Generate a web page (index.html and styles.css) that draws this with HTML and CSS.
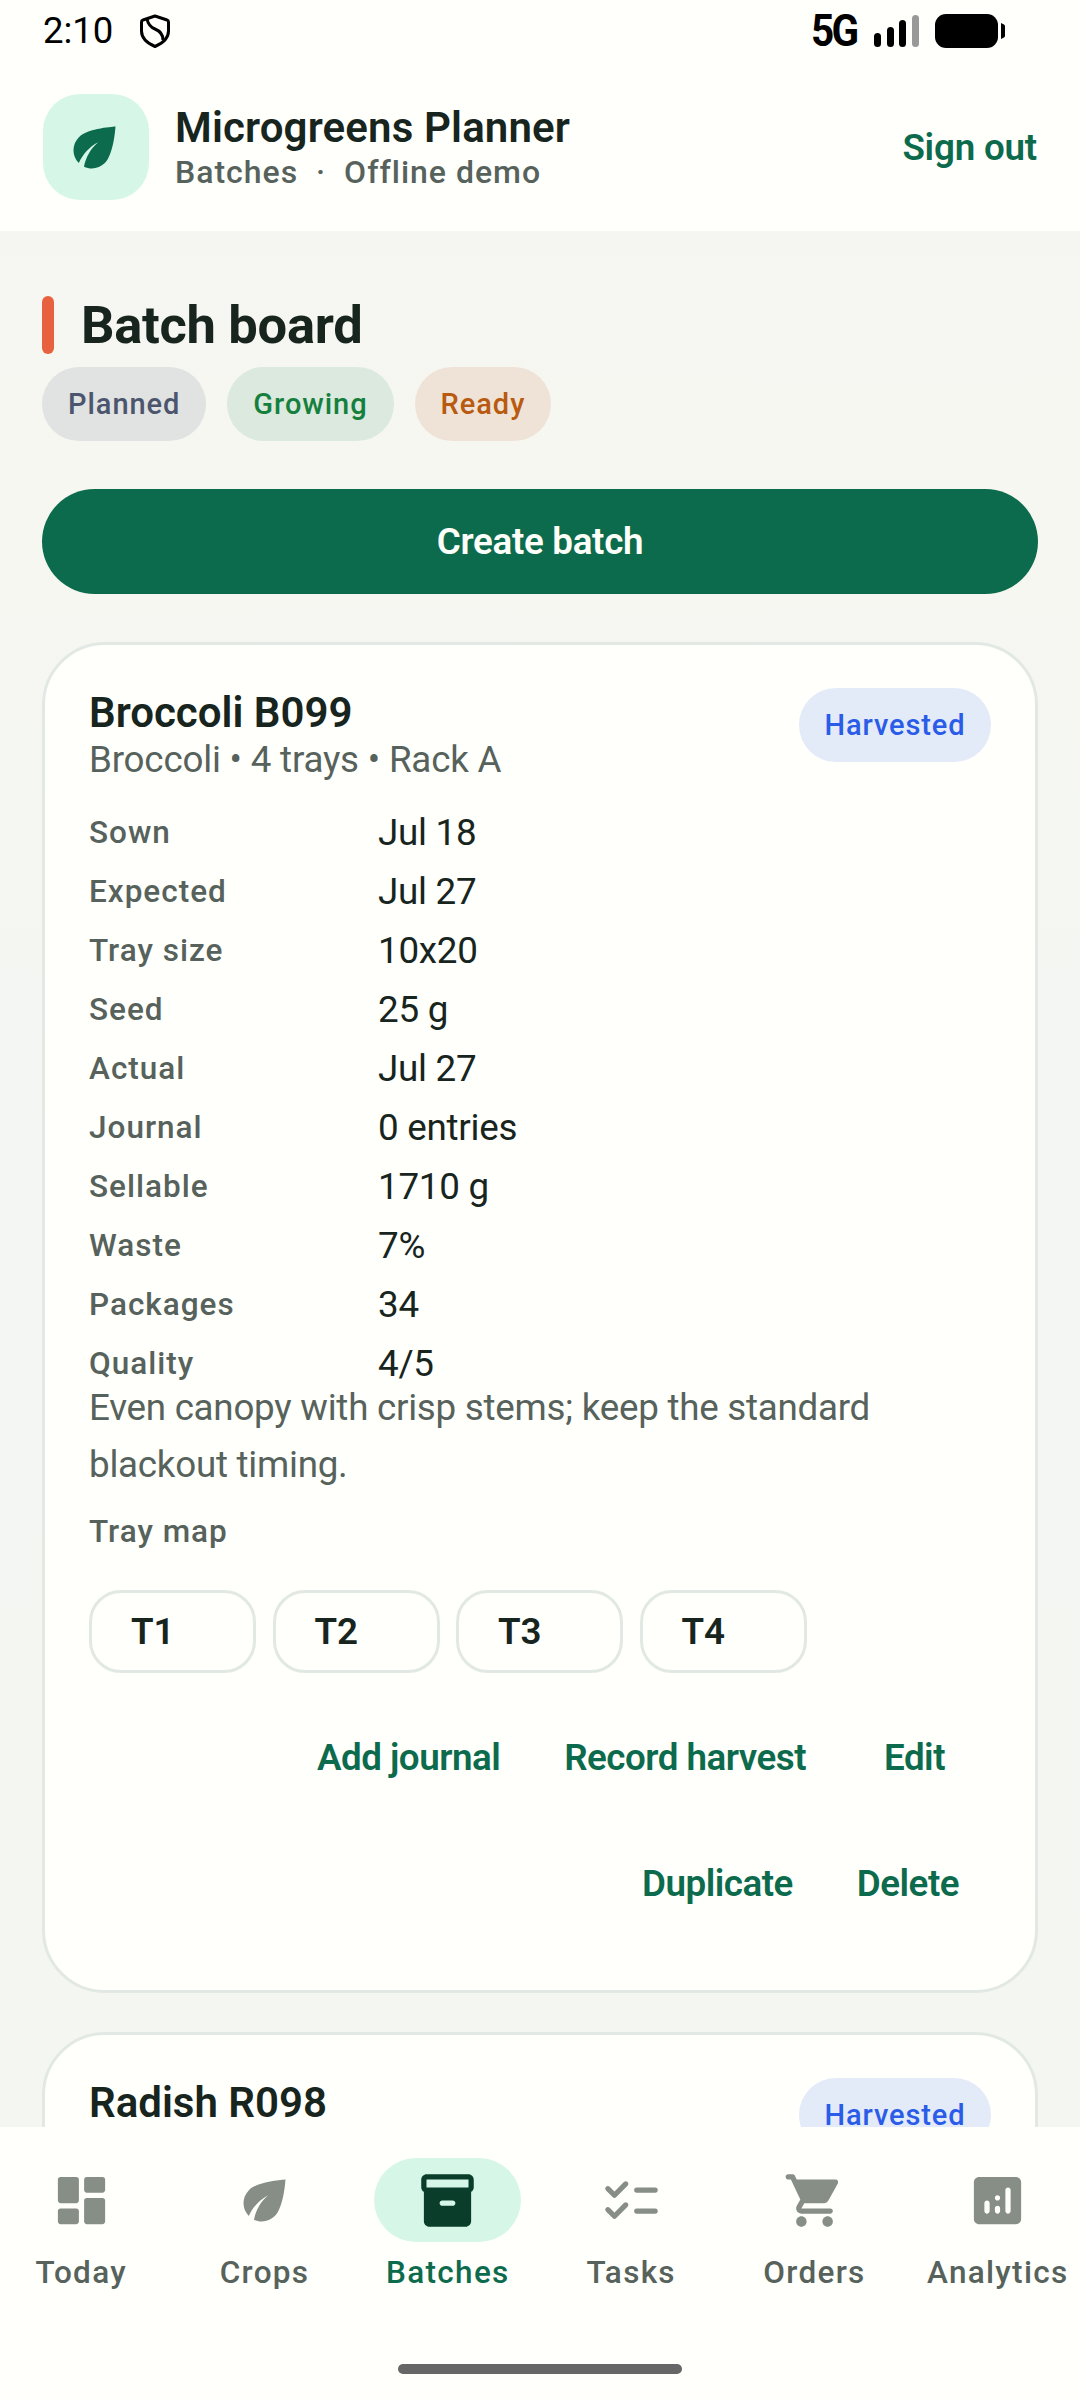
FILE: index.html
```html
<!DOCTYPE html>
<html lang="en">
<head>
<meta charset="utf-8">
<title>Microgreens Planner</title>
<link rel="stylesheet" href="styles.css">
</head>
<body>
<div class="app">
  <header class="top">
    <div class="status">
      <div class="status-left">
        <span class="time">2:10</span>
        <svg class="shield" viewBox="0 0 30 34"><path d="M15 2 L27 6 C28 6.300 28.500 7 28.500 8 L28.500 17 C28.500 24 22 29.500 15 32.500 C8 29.500 1.500 24 1.500 17 L1.500 8 C1.500 7 2 6.300 3 6 Z" fill="none" stroke="#000" stroke-width="3" stroke-linejoin="round"/><path d="M7 5 C8 10 10 13 15 15 C20 17 23 20 23 26" fill="none" stroke="#000" stroke-width="3"/></svg>
      </div>
      <div class="status-right">
        <span class="net">5G</span>
        <svg class="signal" viewBox="0 0 45 32"><rect x="0" y="18" width="7" height="14" rx="3.500" fill="#000"/><rect x="13" y="12" width="7" height="20" rx="3.500" fill="#000"/><rect x="25" y="5" width="7" height="27" rx="3.500" fill="#000"/><rect x="38" y="0" width="7" height="32" rx="3.500" fill="#999"/></svg>
        <svg class="battery" viewBox="0 0 70 34"><rect x="0" y="0" width="63" height="34" rx="11" fill="#000"/><path d="M66 9 L69 10.500 C69.700 11 70 11.500 70 12.500 L70 21.500 C70 22.500 69.700 23 69 23.500 L66 25 Z" fill="#000"/></svg>
      </div>
    </div>
    <div class="appbar">
      <div class="logo">
        <svg class="logo-leaf" viewBox="0 0 24 24"><path d="M6.050 8.050c-2.730 2.730-2.730 7.150-.020 9.880 1.470-3.400 4.090-6.240 7.360-7.930-2.770 2.340-4.710 5.610-5.390 9.320 2.600 1.230 5.800.780 7.950-1.370C19.430 14.470 20 4 20 4S9.530 4.570 6.050 8.050z"/></svg>
      </div>
      <div class="brand">
        <div class="brand-title">Microgreens Planner</div>
        <div class="brand-sub">Batches &nbsp;·&nbsp; Offline demo</div>
      </div>
      <a class="signout">Sign out</a>
    </div>
  </header>

  <main class="board">
    <div class="heading">
      <span class="heading-bar"></span>
      <h1 class="heading-text">Batch board</h1>
    </div>
    <div class="pills">
      <span class="pill pill-planned">Planned</span>
      <span class="pill pill-growing">Growing</span>
      <span class="pill pill-ready">Ready</span>
    </div>
    <button class="create">Create batch</button>

    <article class="card">
      <div class="card-head">
        <div class="card-text">
          <h2 class="card-title">Broccoli B099</h2>
          <div class="card-sub">Broccoli • 4 trays • Rack A</div>
        </div>
        <span class="badge">Harvested</span>
      </div>
      <dl class="facts">
        <dt>Sown</dt><dd>Jul 18</dd>
        <dt>Expected</dt><dd>Jul 27</dd>
        <dt>Tray size</dt><dd>10x20</dd>
        <dt>Seed</dt><dd>25 g</dd>
        <dt>Actual</dt><dd>Jul 27</dd>
        <dt>Journal</dt><dd>0 entries</dd>
        <dt>Sellable</dt><dd>1710 g</dd>
        <dt>Waste</dt><dd>7%</dd>
        <dt>Packages</dt><dd>34</dd>
        <dt>Quality</dt><dd>4/5</dd>
      </dl>
      <p class="note">Even canopy with crisp stems; keep the standard blackout timing.</p>
      <div class="map-label">Tray map</div>
      <div class="chips">
        <span class="chip">T1</span>
        <span class="chip">T2</span>
        <span class="chip">T3</span>
        <span class="chip">T4</span>
      </div>
      <div class="actions">
        <a class="action">Add journal</a>
        <a class="action">Record harvest</a>
        <a class="action">Edit</a>
        <a class="action">Duplicate</a>
        <a class="action">Delete</a>
      </div>
    </article>

    <article class="card card-next">
      <div class="card-head">
        <div class="card-text">
          <h2 class="card-title">Radish R098</h2>
        </div>
        <span class="badge">Harvested</span>
      </div>
    </article>
  </main>

  <nav class="nav">
    <div class="tabs">
      <div class="tab">
        <span class="tab-icon"><svg viewBox="0 0 24 24"><path d="M4 13h6c.550 0 1-.450 1-1V4c0-.550-.450-1-1-1H4c-.550 0-1 .450-1 1v8c0 .550.450 1 1 1zm0 8h6c.550 0 1-.450 1-1v-4c0-.550-.450-1-1-1H4c-.550 0-1 .450-1 1v4c0 .550.450 1 1 1zm10 0h6c.550 0 1-.450 1-1v-8c0-.550-.450-1-1-1h-6c-.550 0-1 .450-1 1v8c0 .550.450 1 1 1zM13 4v4c0 .550.450 1 1 1h6c.550 0 1-.450 1-1V4c0-.550-.450-1-1-1h-6c-.550 0-1 .450-1 1z"/></svg></span>
        <span class="tab-label">Today</span>
      </div>
      <div class="tab">
        <span class="tab-icon"><svg viewBox="0 0 24 24"><path d="M6.050 8.050c-2.730 2.730-2.730 7.150-.020 9.880 1.470-3.400 4.090-6.240 7.360-7.930-2.770 2.340-4.710 5.610-5.390 9.320 2.600 1.230 5.800.780 7.950-1.370C19.430 14.470 20 4 20 4S9.530 4.570 6.050 8.050z"/></svg></span>
        <span class="tab-label">Crops</span>
      </div>
      <div class="tab tab-active">
        <span class="tab-icon"><svg viewBox="0 0 24 24"><path fill-rule="evenodd" d="M20 2H4C3 2 2 2.900 2 4v3c0 .720.430 1.340 1 1.700V20c0 1.100 1.100 2 2 2h14c.900 0 2-.900 2-2V8.700c.570-.350 1-.970 1-1.700V4c0-1.100-1-2-2-2zM20 7H4V4h16zM10 12h4c.550 0 1 .450 1 1s-.450 1-1 1h-4c-.550 0-1-.450-1-1s.450-1 1-1z"/></svg></span>
        <span class="tab-label">Batches</span>
      </div>
      <div class="tab">
        <span class="tab-icon"><svg viewBox="0 0 24 24"><path class="tick" d="M3 7.500l2.500 2.500 4.300-4.300M3 15.500l2.500 2.500 4.300-4.300M14 8h7M14 16h7"/></svg></span>
        <span class="tab-label">Tasks</span>
      </div>
      <div class="tab">
        <span class="tab-icon"><svg viewBox="0 0 24 24"><path d="M7 18c-1.100 0-1.990.900-1.990 2S5.900 22 7 22s2-.900 2-2-.900-2-2-2zM1 3c0 .550.450 1 1 1h1l3.600 7.590-1.350 2.440C4.520 15.370 5.480 17 7 17h11c.550 0 1-.450 1-1s-.450-1-1-1H7l1.100-2h7.450c.750 0 1.410-.410 1.750-1.030l3.580-6.490c.370-.660-.110-1.480-.870-1.480H5.210l-.670-1.430c-.160-.350-.520-.570-.900-.570H2c-.550 0-1 .450-1 1zm16 15c-1.100 0-1.990.900-1.990 2s.890 2 1.990 2 2-.900 2-2-.900-2-2-2z"/></svg></span>
        <span class="tab-label">Orders</span>
      </div>
      <div class="tab">
        <span class="tab-icon"><svg viewBox="0 0 24 24"><path fill-rule="evenodd" d="M19 3H5C3.900 3 3 3.900 3 5v14c0 1.100.900 2 2 2h14c1.100 0 2-.900 2-2V5c0-1.100-.900-2-2-2zM8 12c.550 0 1 .450 1 1v3c0 .550-.450 1-1 1s-1-.450-1-1v-3c0-.550.450-1 1-1zM12 10c.550 0 1 .450 1 1s-.450 1-1 1-1-.450-1-1 .450-1 1-1zM12 14c.550 0 1 .450 1 1v1c0 .550-.450 1-1 1s-1-.450-1-1v-1c0-.550.450-1 1-1zM16 7c.550 0 1 .450 1 1v8c0 .550-.450 1-1 1s-1-.450-1-1V8c0-.550.450-1 1-1z"/></svg></span>
        <span class="tab-label">Analytics</span>
      </div>
    </div>
    <div class="home-bar"></div>
  </nav>
</div>
</body>
</html>
```
FILE: styles.css
```css
* { box-sizing: border-box; }
html, body { margin: 0; padding: 0; }
body { font-family: Roboto, "Noto Sans", sans-serif; color: #17251e; background: #fffffb; }
h1, h2, p, dl, dd { margin: 0; }

.app { width: 1080px; height: 2400px; display: flex; flex-direction: column; overflow: hidden; }

.top { background: #fffffb; flex: none; height: 231px; }
.status { height: 62px; padding: 0 75px 0 43px; display: flex; justify-content: space-between; align-items: center; }
.status-left { display: flex; align-items: center; gap: 27px; }
.time { font-size: 36.500px; line-height: 60px; color: #000; }
.shield { width: 30px; height: 34px; display: block; }
.status-right { display: flex; align-items: center; }
.net { font-size: 44px; font-weight: 700; line-height: 60px; color: #000; letter-spacing: -3px; margin-right: 18px; transform: scaleX(0.92); transform-origin: right center; }
.signal { width: 45px; height: 32px; display: block; margin-right: 16px; }
.battery { width: 70px; height: 34px; display: block; }

.appbar { display: flex; align-items: center; padding: 32px 43px 31px; }
.logo { width: 106px; height: 106px; border-radius: 37px; background: #d6f7e8; display: flex; align-items: center; justify-content: center; flex: none; }
.logo-leaf { width: 63px; height: 63px; fill: #0d6b4d; display: block; margin-right: 3px; }
.brand { margin-left: 26px; flex: 1; }
.brand-title { font-size: 42px; font-weight: 600; line-height: 50px; letter-spacing: 0.150px; color: #17251e; }
.brand-sub { font-size: 32px; font-weight: 500; line-height: 38px; letter-spacing: 1px; color: #56625b; }
.signout { font-size: 36.750px; font-weight: 600; letter-spacing: -0.200px; color: #0d6b4d; }

.board { flex: 1; min-height: 0; overflow: hidden; padding: 65px 42px 0; background: linear-gradient(#f5f6f2, #f7f7f1 250px, #f3f6f2 800px, #f4f6f2); }
.heading { display: flex; align-items: center; gap: 27px; height: 58px; }
.heading-bar { width: 12px; height: 58px; border-radius: 6px; background: #e8613f; }
.heading-text { font-size: 52.500px; font-weight: 700; line-height: 58px; letter-spacing: -0.300px; color: #17251e; }
.pills { display: flex; gap: 21px; margin-top: 13px; }
.pill { height: 74px; padding: 0 26px; border-radius: 37px; font-size: 29px; font-weight: 500; letter-spacing: 0.950px; line-height: 74px; }
.pill-planned { background: #e1e3e2; color: #4b566e; }
.pill-growing { background: #dbe9de; color: #15803d; }
.pill-ready { background: #eee3d6; color: #b85a10; }
.create { display: block; width: 996px; height: 105px; margin-top: 48px; border: 0; border-radius: 53px; background: #0d6b4d; color: #fffffb; font-family: inherit; font-size: 36.750px; font-weight: 600; letter-spacing: -0.300px; }

.card { margin-top: 48px; width: 996px; padding: 43px 44px 43px; border: 3px solid #e2e9e4; border-radius: 63px; background: #fffffb; }
.card-next { margin-top: 39px; }
.card-head { display: flex; justify-content: space-between; align-items: flex-start; }
.card-title { font-size: 42px; font-weight: 600; line-height: 49px; color: #17251e; }
.card-sub { font-size: 36.750px; line-height: 46px; letter-spacing: -0.200px; color: #56625b; }
.badge { height: 74px; width: 192px; text-align: center; border-radius: 37px; background: #e3eaf8; color: #2a5ce8; font-size: 29px; font-weight: 500; letter-spacing: 0.900px; line-height: 74px; }

.facts { display: grid; grid-template-columns: 289px 1fr; row-gap: 29px; margin-top: 35px; line-height: 30px; }
.facts dt { font-size: 31.500px; font-weight: 500; letter-spacing: 1px; color: #56625b; }
.facts dd { font-size: 36.750px; letter-spacing: -0.250px; color: #17251e; }
.note { font-size: 36.750px; line-height: 57px; letter-spacing: -0.250px; color: #56625b; }
.map-label { margin-top: 19px; font-size: 31.500px; font-weight: 500; letter-spacing: 1px; line-height: 40px; color: #56625b; }
.chips { display: flex; gap: 16.500px; margin-top: 38px; }
.chip { width: 167px; height: 83px; padding-left: 39px; border: 3px solid #e2e9e4; border-radius: 32px; font-size: 36.750px; font-weight: 600; line-height: 77px; color: #17251e; }
.actions { display: flex; flex-wrap: wrap; justify-content: flex-end; margin-top: 22px; }
.action { min-width: 153px; height: 126px; padding: 0 32px; text-align: center; font-size: 36.750px; font-weight: 600; letter-spacing: -0.500px; line-height: 126px; color: #0d6b4d; }

.nav { flex: none; height: 273px; background: #fffffb; padding-top: 31px; }
.tabs { display: flex; justify-content: center; padding-right: 1px; }
.tab { flex: none; width: 183.300px; display: flex; flex-direction: column; align-items: center; }
.tab-icon { width: 147px; height: 84px; border-radius: 42px; display: flex; align-items: center; justify-content: center; }
.tab-icon svg { width: 63px; height: 63px; display: block; fill: #878e85; }
.tab-label { margin-top: 11px; font-size: 31.500px; font-weight: 500; letter-spacing: 1.300px; line-height: 40px; color: #56625b; white-space: nowrap; }
.tick { fill: none !important; stroke: #878e85; stroke-width: 2; stroke-linecap: round; stroke-linejoin: round; }
.tab-active .tab-icon { background: #d6f7e8; }
.tab-active .tab-icon svg { fill: #0a3d2a; }
.tab-active .tab-label { color: #0d6b4d; }
.home-bar { width: 284px; height: 10px; border-radius: 5px; background: #666; margin: 71px auto 0; }
```
